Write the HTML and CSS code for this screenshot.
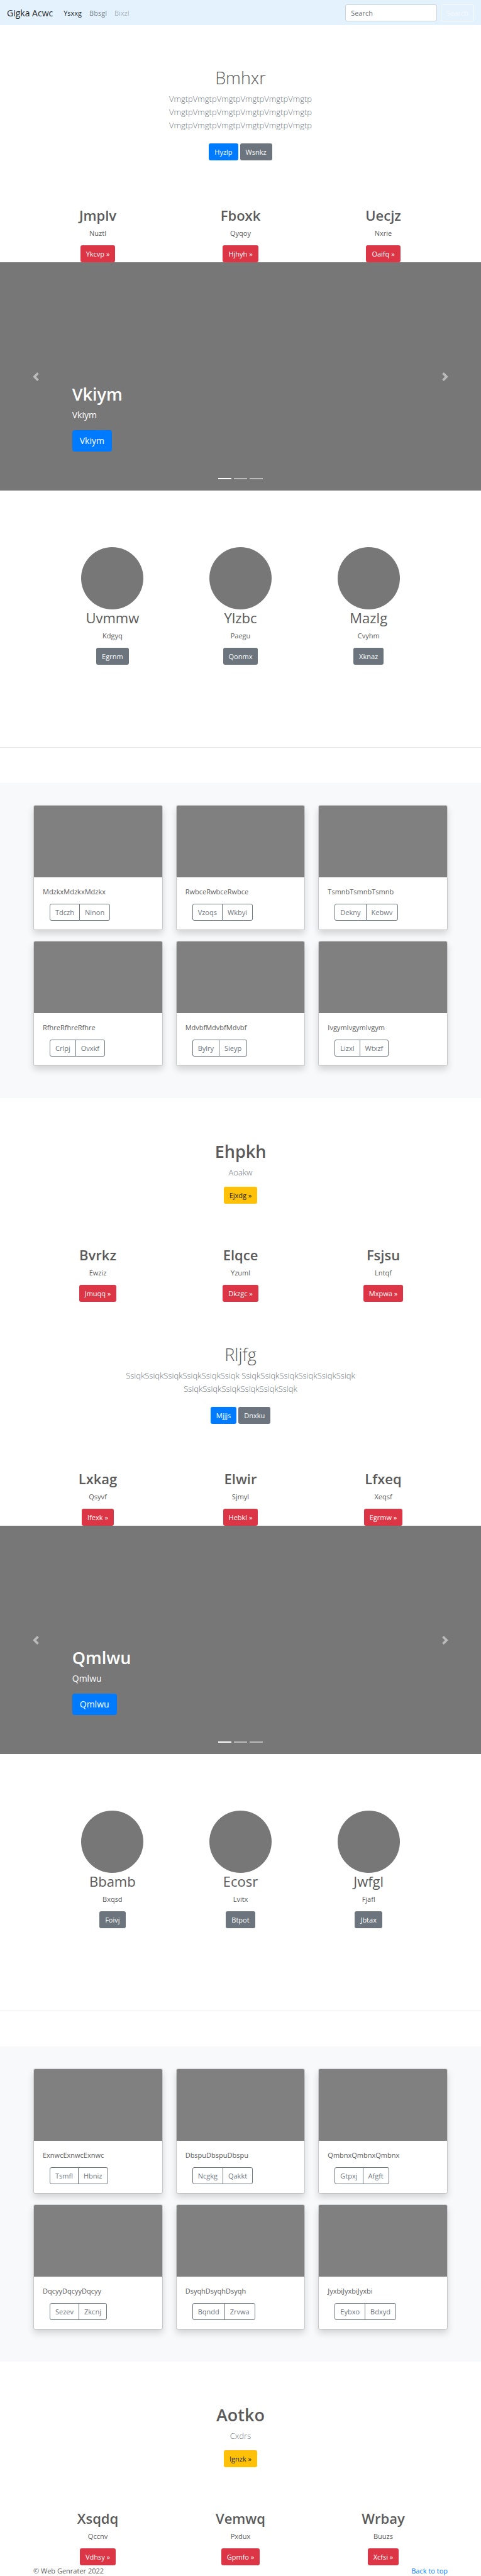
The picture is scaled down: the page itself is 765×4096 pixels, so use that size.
FILE: index.html
```html
<!DOCTYPE html>
<html lang="en">
<head>
<meta charset="utf-8">
<meta name="viewport" content="width=device-width, initial-scale=1">
<title>Gigka Acwc</title>
<link rel="stylesheet" href="styles.css">
</head>
<body>
<header class="navbar" id="top">
  <a class="brand" href="#">Gigka Acwc</a>
  <nav class="nav-links">
    <a class="active" href="#">Ysxxg</a>
    <a href="#">Bbsgl</a>
    <a class="disabled" href="#">Bixzl</a>
  </nav>
  <form class="search">
    <input type="text" placeholder="Search" aria-label="Search">
    <button class="btn btn-outline-light" type="button">Search</button>
  </form>
</header>
<main>
  <section class="hero">
    <h1 class="light">Bmhxr</h1>
    <p class="lead">VmgtpVmgtpVmgtpVmgtpVmgtpVmgtp VmgtpVmgtpVmgtpVmgtpVmgtpVmgtp VmgtpVmgtpVmgtpVmgtpVmgtpVmgtp</p>
    <div class="actions"><a class="btn btn-primary" href="#">Hyzlp</a><a class="btn btn-secondary" href="#">Wsnkz</a></div>
  </section>
  <section class="columns">
    <div class="column"><h2>Jmplv</h2><p>Nuztl</p><a class="btn btn-danger" href="#">Ykcvp »</a></div>
    <div class="column"><h2>Fboxk</h2><p>Qyqoy</p><a class="btn btn-danger" href="#">Hjhyh »</a></div>
    <div class="column"><h2>Uecjz</h2><p>Nxrie</p><a class="btn btn-danger" href="#">Oaifq »</a></div>
  </section>
  <section class="carousel">
    <button class="control prev" type="button" aria-label="Previous"><svg viewBox="0 0 8 8"><path d="M5.25 0l-4 4 4 4 1.5-1.5L4.25 4l2.5-2.5L5.25 0z"/></svg></button>
    <div class="caption"><h1>Vkiym</h1><p>Vkiym</p><a class="btn btn-primary btn-lg" href="#">Vkiym</a></div>
    <button class="control next" type="button" aria-label="Next"><svg viewBox="0 0 8 8"><path d="M2.75 0l-1.5 1.5L3.75 4l-2.5 2.5L2.75 8l4-4-4-4z"/></svg></button>
    <div class="indicators"><span class="current"></span><span></span><span></span></div>
  </section>
  <section class="profiles">
    <div class="column"><div class="avatar"></div><h2>Uvmmw</h2><p>Kdgyq</p><a class="btn btn-secondary" href="#">Egrnm</a></div>
    <div class="column"><div class="avatar"></div><h2>Ylzbc</h2><p>Paegu</p><a class="btn btn-secondary" href="#">Qonmx</a></div>
    <div class="column"><div class="avatar"></div><h2>Mazlg</h2><p>Cvyhm</p><a class="btn btn-secondary" href="#">Xknaz</a></div>
  </section>
  <hr>
  <section class="album">
    <article class="card"><div class="thumb"></div><div class="card-body"><p>MdzkxMdzkxMdzkx</p><div class="group"><button type="button">Tdczh</button><button type="button">Ninon</button></div></div></article>
    <article class="card"><div class="thumb"></div><div class="card-body"><p>RwbceRwbceRwbce</p><div class="group"><button type="button">Vzoqs</button><button type="button">Wkbyi</button></div></div></article>
    <article class="card"><div class="thumb"></div><div class="card-body"><p>TsmnbTsmnbTsmnb</p><div class="group"><button type="button">Dekny</button><button type="button">Kebwv</button></div></div></article>
    <article class="card"><div class="thumb"></div><div class="card-body"><p>RfhreRfhreRfhre</p><div class="group"><button type="button">Crlpj</button><button type="button">Ovxkf</button></div></div></article>
    <article class="card"><div class="thumb"></div><div class="card-body"><p>MdvbfMdvbfMdvbf</p><div class="group"><button type="button">Bylry</button><button type="button">Sieyp</button></div></div></article>
    <article class="card"><div class="thumb"></div><div class="card-body"><p>IvgymIvgymIvgym</p><div class="group"><button type="button">Lizxl</button><button type="button">Wtxzf</button></div></div></article>
  </section>
  <section class="banner">
    <h1>Ehpkh</h1>
    <p class="lead">Aoakw</p>
    <a class="btn btn-warning" href="#">Ejxdg »</a>
  </section>
  <section class="columns">
    <div class="column"><h2>Bvrkz</h2><p>Ewziz</p><a class="btn btn-danger" href="#">Jmuqq »</a></div>
    <div class="column"><h2>Elqce</h2><p>Yzuml</p><a class="btn btn-danger" href="#">Dkzgc »</a></div>
    <div class="column"><h2>Fsjsu</h2><p>Lntqf</p><a class="btn btn-danger" href="#">Mxpwa »</a></div>
  </section>
  <section class="hero">
    <h1 class="light">Rljfg</h1>
    <p class="lead">SsiqkSsiqkSsiqkSsiqkSsiqkSsiqk SsiqkSsiqkSsiqkSsiqkSsiqkSsiqk SsiqkSsiqkSsiqkSsiqkSsiqkSsiqk</p>
    <div class="actions"><a class="btn btn-primary" href="#">Mjjjs</a><a class="btn btn-secondary" href="#">Dnxku</a></div>
  </section>
  <section class="columns">
    <div class="column"><h2>Lxkag</h2><p>Qsyvf</p><a class="btn btn-danger" href="#">Ifexk »</a></div>
    <div class="column"><h2>Elwir</h2><p>Sjmyl</p><a class="btn btn-danger" href="#">Hebkl »</a></div>
    <div class="column"><h2>Lfxeq</h2><p>Xeqsf</p><a class="btn btn-danger" href="#">Egrmw »</a></div>
  </section>
  <section class="carousel">
    <button class="control prev" type="button" aria-label="Previous"><svg viewBox="0 0 8 8"><path d="M5.25 0l-4 4 4 4 1.5-1.5L4.25 4l2.5-2.5L5.25 0z"/></svg></button>
    <div class="caption"><h1>Qmlwu</h1><p>Qmlwu</p><a class="btn btn-primary btn-lg" href="#">Qmlwu</a></div>
    <button class="control next" type="button" aria-label="Next"><svg viewBox="0 0 8 8"><path d="M2.75 0l-1.5 1.5L3.75 4l-2.5 2.5L2.75 8l4-4-4-4z"/></svg></button>
    <div class="indicators"><span class="current"></span><span></span><span></span></div>
  </section>
  <section class="profiles">
    <div class="column"><div class="avatar"></div><h2>Bbamb</h2><p>Bxqsd</p><a class="btn btn-secondary" href="#">Foivj</a></div>
    <div class="column"><div class="avatar"></div><h2>Ecosr</h2><p>Lvitx</p><a class="btn btn-secondary" href="#">Btpot</a></div>
    <div class="column"><div class="avatar"></div><h2>Jwfgl</h2><p>Fjafl</p><a class="btn btn-secondary" href="#">Jbtax</a></div>
  </section>
  <hr>
  <section class="album">
    <article class="card"><div class="thumb"></div><div class="card-body"><p>ExnwcExnwcExnwc</p><div class="group"><button type="button">Tsmfl</button><button type="button">Hbniz</button></div></div></article>
    <article class="card"><div class="thumb"></div><div class="card-body"><p>DbspuDbspuDbspu</p><div class="group"><button type="button">Ncgkg</button><button type="button">Qakkt</button></div></div></article>
    <article class="card"><div class="thumb"></div><div class="card-body"><p>QmbnxQmbnxQmbnx</p><div class="group"><button type="button">Gtpxj</button><button type="button">Afgft</button></div></div></article>
    <article class="card"><div class="thumb"></div><div class="card-body"><p>DqcyyDqcyyDqcyy</p><div class="group"><button type="button">Sezev</button><button type="button">Zkcnj</button></div></div></article>
    <article class="card"><div class="thumb"></div><div class="card-body"><p>DsyqhDsyqhDsyqh</p><div class="group"><button type="button">Bqndd</button><button type="button">Zrvwa</button></div></div></article>
    <article class="card"><div class="thumb"></div><div class="card-body"><p>JyxbiJyxbiJyxbi</p><div class="group"><button type="button">Eybxo</button><button type="button">Bdxyd</button></div></div></article>
  </section>
  <section class="banner">
    <h1>Aotko</h1>
    <p class="lead">Cxdrs</p>
    <a class="btn btn-warning" href="#">Ignzk »</a>
  </section>
  <section class="columns">
    <div class="column"><h2>Xsqdq</h2><p>Qccnv</p><a class="btn btn-danger" href="#">Vdhsy »</a></div>
    <div class="column"><h2>Vemwq</h2><p>Pxdux</p><a class="btn btn-danger" href="#">Gpmfo »</a></div>
    <div class="column"><h2>Wrbay</h2><p>Buuzs</p><a class="btn btn-danger" href="#">Xcfsi »</a></div>
  </section>
</main>
<footer class="footer">
  <span>© Web Genrater 2022</span>
  <a href="#top">Back to top</a>
</footer>
</body>
</html>
```

FILE: styles.css
```css
* { box-sizing: border-box; }

body {
  margin: 0;
  background: #fff;
  color: #5a5a5a;
  font-family: "Open Sans", "Noto Sans", sans-serif;
  font-size: 11px;
  line-height: 17px;
}

h1, h2, p { margin: 0; }
h1 { font-size: 27px; line-height: 34px; font-weight: 600; }
h2 { font-size: 22px; line-height: 27px; font-weight: 600; }
a { color: #007bff; text-decoration: none; }

button, input { font: inherit; }

.btn {
  display: inline-block;
  padding: 4px 8px;
  border: 1px solid transparent;
  border-radius: 3px;
  background: none;
  color: #fff;
  line-height: 17px;
}
.btn-primary { background: #007bff; }
.btn-secondary { background: #6c757d; }
.btn-danger { background: #dc3545; }
.btn-warning { background: #ffc107; color: #212529; }
.btn-outline-light { border-color: #f8f9fa; color: #f8f9fa; }
.btn-lg {
  padding: 5px 11px;
  border-radius: 4px;
  font-size: 14px;
  line-height: 22px;
}

/* Top bar */
.navbar {
  display: flex;
  align-items: center;
  min-height: 40px;
  padding: 6px 11px;
  background: #e3f2fd;
}
.brand {
  margin-right: 17px;
  color: rgba(0, 0, 0, .9);
  font-size: 14px;
}
.nav-links { display: flex; gap: 12px; }
.nav-links a { color: rgba(0, 0, 0, .5); }
.nav-links .active { color: rgba(0, 0, 0, .9); }
.nav-links .disabled { color: rgba(0, 0, 0, .3); }
.search { display: flex; gap: 6px; margin-left: auto; }
.search input {
  width: 146px;
  padding: 4px 8px;
  border: 1px solid #ced4da;
  border-radius: 3px;
  background: #fff;
  color: #495057;
}
.search input::placeholder { color: #6c757d; opacity: 1; }

/* Intro blocks */
.hero, .banner {
  display: flex;
  flex-direction: column;
  align-items: center;
  text-align: center;
}
.hero { padding: 67px 16px 74px; }
.banner { padding: 68px 16px; }
.hero h1, .banner h1 { margin-bottom: 6px; }
.hero .light { font-weight: 300; }
.lead {
  max-width: 432px;
  color: #6c757d;
  font-size: 13px;
  font-weight: 300;
  line-height: 21px;
}
.hero .lead { margin-bottom: 18px; }
.banner .lead { margin-bottom: 12px; }
.actions { display: flex; gap: 3px; }

/* Three-column rows */
.columns, .profiles {
  display: grid;
  grid-template-columns: repeat(3, 1fr);
}
.columns { padding: 0 42px; }
.profiles { padding: 90px 77px 131px; }
.profiles h2 { font-weight: 400; }
.column {
  display: flex;
  flex-direction: column;
  align-items: center;
}
.column h2 { margin-bottom: 6px; }
.column p { margin-bottom: 11px; }
.avatar {
  width: 99px;
  height: 99px;
  border-radius: 50%;
  background: #777;
}

/* Carousel */
.carousel {
  position: relative;
  display: grid;
  grid-template-columns: 15% 1fr 15%;
  height: 363px;
  background: #777;
  color: #fff;
}
.control {
  display: flex;
  align-items: center;
  justify-content: center;
  padding: 0;
  border: 0;
  background: none;
  opacity: .5;
}
.control svg { width: 14px; height: 14px; fill: #fff; }
.caption { align-self: end; padding-bottom: 62px; }
.caption h1 { margin-bottom: 6px; }
.caption p {
  margin-bottom: 14px;
  font-size: 14px;
  line-height: 20px;
}
.caption .btn { display: inline-block; vertical-align: top; }
.indicators {
  position: absolute;
  right: 0;
  bottom: 18px;
  left: 0;
  display: flex;
  justify-content: center;
  gap: 4px;
}
.indicators span { width: 21px; height: 2px; background: #fff; opacity: .5; }
.indicators .current { opacity: 1; }

hr {
  height: 1px;
  margin: 0 0 56px;
  border: 0;
  background: #e5e5e5;
}

/* Album */
.album {
  display: grid;
  grid-template-columns: repeat(3, 1fr);
  gap: 17px 21px;
  padding: 35px 53px 51px;
  background: #f8f9fa;
}
.card {
  overflow: hidden;
  border: 1px solid rgba(0, 0, 0, .125);
  border-radius: 3px;
  background: #fff;
  background-clip: padding-box;
  box-shadow: 0 6px 11px rgba(0, 0, 0, .15);
}
.thumb { height: 114px; background: gray; }
.card-body { padding: 14px; }
.card-body p { margin-bottom: 11px; }
.group { display: flex; margin-left: 11px; }
.group button {
  padding: 4px 8px;
  border: 1px solid #6c757d;
  background: none;
  color: #6c757d;
  line-height: 17px;
}
.group button:first-child { border-radius: 3px 0 0 3px; }
.group button:last-child { margin-left: -1px; border-radius: 0 3px 3px 0; }

.footer {
  display: flex;
  justify-content: space-between;
  padding: 0 53px;
}
```
